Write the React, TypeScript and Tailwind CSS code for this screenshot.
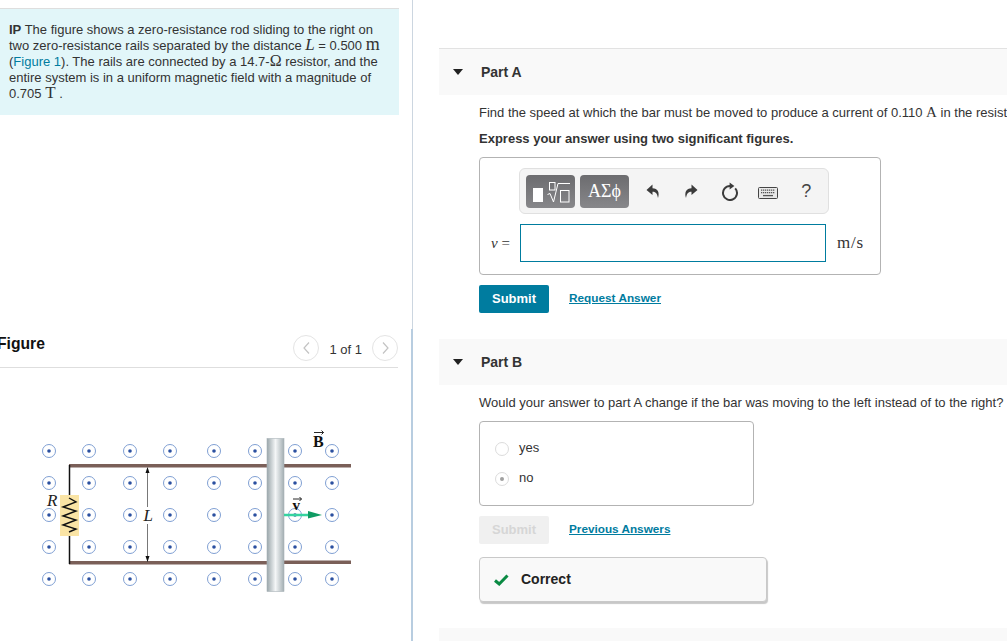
const F = "font-['Liberation_Sans',Arial,sans-serif]";
const S = "font-['Liberation_Serif','DejaVu_Serif',serif]";

function Dot({ x, y }: { x: number; y: number }) {
  return (
    <g>
      <circle cx={x} cy={y} r="6.5" fill="#fff" stroke="#7f9fd3" strokeWidth="1" />
      <circle cx={x} cy={y} r="1.8" fill="#2b50a0" />
    </g>
  );
}

function Figure() {
  const xs = [49, 89, 130, 170, 214, 255, 295, 332];
  const ys = [451, 483, 515, 547, 579];
  return (
    <svg width="400" height="220" viewBox="0 421 400 220" className="block">
      {ys.map((y) => xs.map((x) => <Dot key={`${x}-${y}`} x={x} y={y} />))}
      <rect x="69" y="464" width="198" height="3.5" fill="#7a5f58" />
      <rect x="69" y="561" width="198" height="3.5" fill="#7a5f58" />
      <rect x="282" y="464" width="69" height="3.5" fill="#7a5f58" />
      <rect x="282" y="560.5" width="69" height="3.5" fill="#7a5f58" />
      <path d="M69.5 465V564" stroke="#111" strokeWidth="1.5" fill="none" />
      <rect x="60" y="495" width="19" height="41" fill="#fae4a5" />
      <path d="M69 498L76 502L63 507L76 511L63 516L76 520L63 525L76 529L69 532" stroke="#111" strokeWidth="1.4" fill="none" />
      <path d="M147.5 468V507M147.5 524V562" stroke="#555" strokeWidth="0.8" />
      <path d="M147.5 467l-2 6h4zM147.5 562l-2-6h4z" fill="#111" />
      <defs>
        <linearGradient id="rod" x1="0" x2="1" y1="0" y2="0">
          <stop offset="0" stopColor="#9aa6aa" />
          <stop offset="0.5" stopColor="#f4f6f7" />
          <stop offset="1" stopColor="#a3aeb2" />
        </linearGradient>
      </defs>
      <rect x="267" y="438.5" width="17" height="153" fill="url(#rod)" stroke="#a9b3b7" strokeWidth="0.6" />
      <path d="M284 515H310" stroke="#35d3a0" strokeWidth="2.5" />
      <path d="M308 511L322 515L308 518.5z" fill="#0f9b63" />
      <text x="143.5" y="521" fontSize="17" fontStyle="italic" fontFamily="Liberation Serif" fill="#222">L</text>
      <text x="47" y="506" fontSize="17" fontStyle="italic" fontFamily="Liberation Serif" fill="#222">R</text>
      <text x="313" y="447" fontSize="16" fontWeight="bold" fontFamily="Liberation Serif" fill="#111">B</text>
      <path d="M314 432.5h9.5M321.5 430.5l2 2l-2 2" stroke="#111" strokeWidth="0.9" fill="none" />
      <text x="292.5" y="510" fontSize="15" fontWeight="bold" fontFamily="Liberation Serif" fill="#111">v</text>
      <path d="M293 499h8.5M299.5 497l2 2l-2 2" stroke="#111" strokeWidth="0.9" fill="none" />
    </svg>
  );
}

function ToolIcons() {
  const cell = "w-[38.3px] flex items-center justify-center";
  return (
    <div className="flex items-center ml-[5px]">
      <span className={cell}>
        <svg width="16" height="16" viewBox="0 0 16 16" fill="#3b3b3b"><path d="M7.5 1.5L1.5 7L7.5 12V8.8C10.5 8.8 12 10 13 15C14.8 9.5 12.8 5.5 7.5 5.3z" /></svg>
      </span>
      <span className={cell}>
        <svg width="16" height="16" viewBox="0 0 16 16" fill="#3b3b3b"><path d="M8.5 1.5L14.5 7L8.5 12V8.8C5.5 8.8 4 10 3 15C1.2 9.5 3.2 5.5 8.5 5.3z" /></svg>
      </span>
      <span className={cell}>
        <svg width="18" height="19" viewBox="0 0 18 19" fill="none"><path d="M9 4A7 7 0 1 0 14.2 6.3" stroke="#3b3b3b" strokeWidth="2" /><path d="M8.6 0.6L13.4 4L8.6 7.4z" fill="#3b3b3b" /></svg>
      </span>
      <span className={`${cell} pt-[4px]`}>
        <svg width="20" height="12" viewBox="0 0 20 12"><rect x="0.5" y="0.5" width="19" height="11" rx="1" fill="#e8e8e8" stroke="#444" /><path d="M3 3.2h14M3 5.6h14" stroke="#555" strokeWidth="1.2" strokeDasharray="1.3 .7" /><path d="M5 8.6h10" stroke="#555" strokeWidth="1.3" /></svg>
      </span>
      <span className={`${cell} ${F} text-[18px] leading-none text-[#444]`}>?</span>
    </div>
  );
}

function RootIcon() {
  return (
    <svg width="49" height="33" viewBox="0 0 49 33" fill="none" className="block">
      <rect x="7" y="13" width="10" height="14" fill="#fff" />
      <rect x="23.5" y="7.5" width="5.5" height="7.5" stroke="#fff" />
      <rect x="34.5" y="15.5" width="8.5" height="11.5" stroke="#fff" />
      <path d="M21.5 19.5L24 18.5L27.5 27L32 8.5H44" stroke="#fff" strokeWidth="1" />
    </svg>
  );
}

export default function App() {
  return (
    <div className={`${F} w-[1007px] h-[641px] overflow-hidden bg-white flex text-[#333] text-[13px]`}>
      <aside className="w-[411px] shrink-0 flex flex-col pt-2">
        <div className="w-[399px] h-[107px] bg-[#e2f6f9] border-t border-[#dedede] pl-[9px] pt-[13px] text-[13px] leading-[16px] text-[#333]">
          <p className="whitespace-nowrap"><b>IP</b> The figure shows a zero-resistance rod sliding to the right on</p>
          <p className="whitespace-nowrap">two zero-resistance rails separated by the distance <i className={`${S} text-[17px] leading-[0]`}>L</i> = 0.500 <span className={`${S} text-[18px] leading-[0]`}>m</span></p>
          <p className="whitespace-nowrap">(<span className="text-[#007c9f]">Figure 1</span>). The rails are connected by a 14.7-<span className={`${S} text-[16px] leading-[0]`}>Ω</span> resistor, and the</p>
          <p className="whitespace-nowrap">entire system is in a uniform magnetic field with a magnitude of</p>
          <p className="whitespace-nowrap">0.705 <span className={`${S} text-[17px] leading-[0]`}>T</span> .</p>
        </div>
        <div className="mt-[214px] w-[398px] h-[39px] border-b border-[#dedede] flex items-start justify-between">
          <h2 className="font-bold text-[15.7px] leading-[18px] text-[#111] ml-[-3px] mt-[6px]">Figure</h2>
          <div className="flex items-start gap-[10px] mt-[6px]">
            <span className="w-[26px] h-[26px] rounded-full border border-[#e4e4e4] flex items-center justify-center">
              <svg width="9" height="14" viewBox="0 0 9 14" fill="none"><path d="M7 1.5L2 7L7 12.5" stroke="#c3c3c3" strokeWidth="1.2" /></svg>
            </span>
            <span className="text-[#333] leading-[16px] pt-[7px]">1 of 1</span>
            <span className="w-[26px] h-[26px] rounded-full border border-[#e4e4e4] flex items-center justify-center">
              <svg width="9" height="14" viewBox="0 0 9 14" fill="none"><path d="M2 1.5L7 7L2 12.5" stroke="#c3c3c3" strokeWidth="1.2" /></svg>
            </span>
          </div>
        </div>
        <div className="mt-[53px]"><Figure /></div>
      </aside>

      <div className="w-[2px] h-[641px] shrink-0 flex flex-col">
        <div className="h-[329px] w-px ml-px bg-[#ccd6e0]" />
        <div className="flex-1 bg-[#b8cde0]" />
      </div>

      <main className="flex-1 min-w-0 pl-[26px] pt-[48px] overflow-hidden">
        <section className="h-[47px] w-[600px] bg-[#f9f9f9] border-t border-[#e2e2e2] flex items-center pl-[14px]">
          <span className="w-0 h-0 border-x-[5.5px] border-x-transparent border-t-[6px] border-t-[#222]" />
          <h3 className="ml-[17px] font-bold text-[14px] text-[#333] pl-px">Part A</h3>
        </section>
        <div className="pl-[40px]">
          <p className="mt-[10px] leading-[16px] whitespace-nowrap">Find the speed at which the bar must be moved to produce a current of 0.110 <span className={`${S} text-[15px] leading-[0]`}>A</span> in the resistor.</p>
          <p className="mt-[10px] font-bold leading-[16px]">Express your answer using two significant figures.</p>
          <div className="mt-[10px] w-[402px] h-[118px] border border-[#b3b3b3] rounded-[4px] relative">
            <div className="absolute left-[39px] top-[10px] w-[310px] h-[46px] bg-[#f4f4f4] border border-[#e0e0e0] rounded-[6px] flex items-center pl-[6px]">
              <div className="w-[49px] h-[33px] rounded-[4px] bg-gradient-to-b from-[#6c6c6f] to-[#87878a]"><RootIcon /></div>
              <div className={`${S} ml-[5px] w-[49px] h-[33px] rounded-[4px] bg-gradient-to-b from-[#6c6c6f] to-[#87878a] text-white text-[18px] flex items-center justify-center`}>ΑΣϕ</div>
              <ToolIcons />
            </div>
            <div className="absolute left-[11px] top-[66px] flex items-center">
              <span className={`${S} w-[29px] text-[15px] text-[#333] whitespace-nowrap`}><i>v</i> =</span>
              <div className="w-[306px] h-[38px] border border-[#007c9f]" />
              <span className={`${S} ml-[11px] text-[17px] tracking-[0.8px] text-[#333]`}>m/s</span>
            </div>
          </div>
          <div className="mt-[10px] flex items-center">
            <button className="w-[70px] h-[28px] bg-[#007c9f] rounded-[2px] text-white font-bold text-[13px]">Submit</button>
            <a className="ml-[20px] font-bold text-[11.8px] text-[#007c9f] underline">Request Answer</a>
          </div>
        </div>
        <section className="mt-[26px] h-[46px] w-[600px] bg-[#f9f9f9] flex items-center pl-[14px]">
          <span className="w-0 h-0 border-x-[5.5px] border-x-transparent border-t-[6px] border-t-[#222]" />
          <h3 className="ml-[17px] font-bold text-[14px] text-[#333] pl-px">Part B</h3>
        </section>
        <div className="pl-[40px]">
          <p className="mt-[10px] leading-[16px] whitespace-nowrap">Would your answer to part A change if the bar was moving to the left instead of to the right?</p>
          <div className="mt-[10px] w-[275px] h-[85px] border border-[#b3b3b3] rounded-[4px] pl-[15px] pt-[20px]">
            <label className="flex items-start h-[14px]">
              <span className="w-[14px] h-[14px] rounded-full border border-[#dcdcdc] bg-white" />
              <span className="ml-[10px] leading-[14px] -mt-[1px]">yes</span>
            </label>
            <label className="flex items-start h-[14px] mt-[16px]">
              <span className="w-[14px] h-[14px] rounded-full border border-[#dcdcdc] bg-white flex items-center justify-center"><span className="w-[4px] h-[4px] rounded-full bg-[#a0a0a0]" /></span>
              <span className="ml-[10px] leading-[14px] -mt-[1px]">no</span>
            </label>
          </div>
          <div className="mt-[10px] flex items-center">
            <button className="w-[70px] h-[28px] bg-[#f0f0f0] rounded-[2px] text-[#d6d6d6] font-bold text-[13px]">Submit</button>
            <a className="ml-[20px] pb-[2px] font-bold text-[11.75px] text-[#007c9f] underline">Previous Answers</a>
          </div>
          <div className="mt-[13px] w-[288px] h-[45px] bg-[#f9f9f9] border border-[#c9c9c9] rounded-[4px] shadow-[1px_2px_1px_rgba(0,0,0,0.22)] flex items-center pl-[14px]">
            <svg width="15" height="12" viewBox="0 0 15 12"><path d="M1 6.5L5.2 10L13.5 1.5" stroke="#0a8a43" strokeWidth="3" fill="none" /></svg>
            <span className="ml-[12px] font-bold text-[14px] text-[#222]">Correct</span>
          </div>
        </div>
        <div className="mt-[26px] h-[20px] w-[600px] bg-[#f9f9f9]" />
      </main>
    </div>
  );
}
